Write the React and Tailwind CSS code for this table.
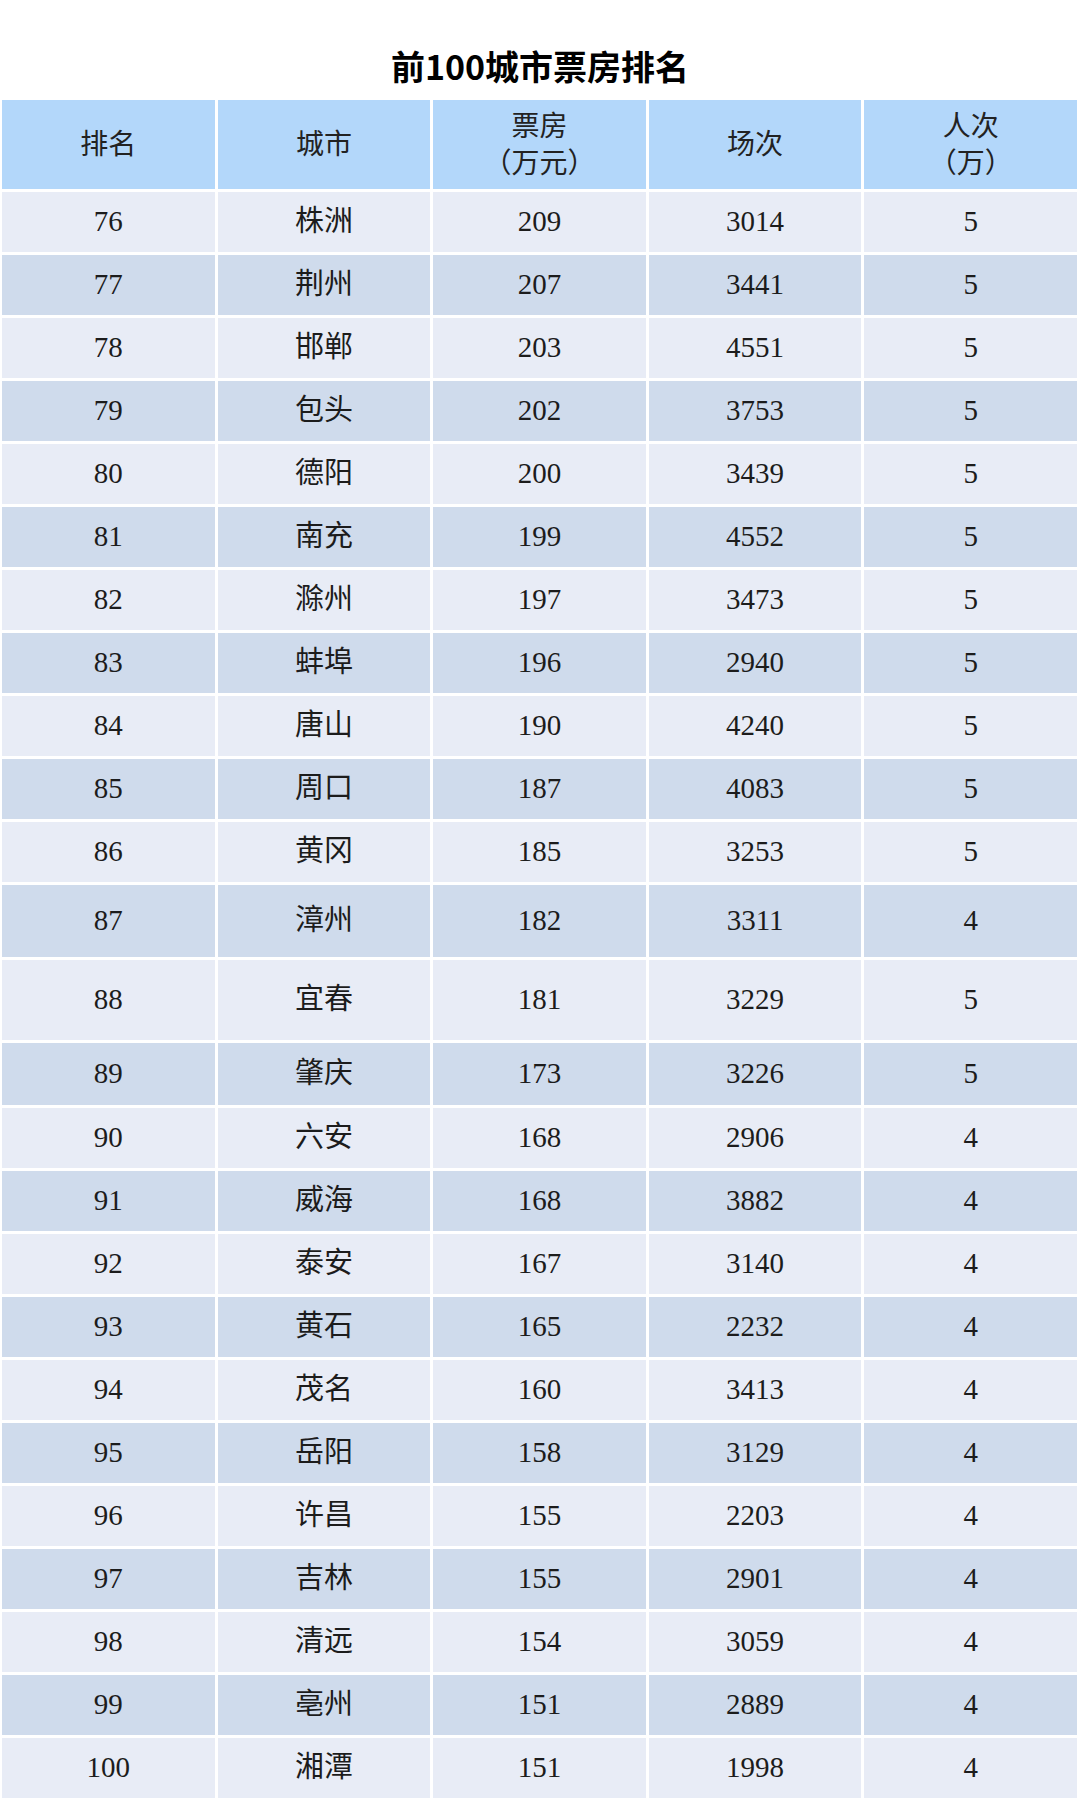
const rows = [
  [76, "株洲", 209, 3014, 5],
  [77, "荆州", 207, 3441, 5],
  [78, "邯郸", 203, 4551, 5],
  [79, "包头", 202, 3753, 5],
  [80, "德阳", 200, 3439, 5],
  [81, "南充", 199, 4552, 5],
  [82, "滁州", 197, 3473, 5],
  [83, "蚌埠", 196, 2940, 5],
  [84, "唐山", 190, 4240, 5],
  [85, "周口", 187, 4083, 5],
  [86, "黄冈", 185, 3253, 5],
  [87, "漳州", 182, 3311, 4],
  [88, "宜春", 181, 3229, 5],
  [89, "肇庆", 173, 3226, 5],
  [90, "六安", 168, 2906, 4],
  [91, "威海", 168, 3882, 4],
  [92, "泰安", 167, 3140, 4],
  [93, "黄石", 165, 2232, 4],
  [94, "茂名", 160, 3413, 4],
  [95, "岳阳", 158, 3129, 4],
  [96, "许昌", 155, 2203, 4],
  [97, "吉林", 155, 2901, 4],
  [98, "清远", 154, 3059, 4],
  [99, "亳州", 151, 2889, 4],
  [100, "湘潭", 151, 1998, 4],
];

// a few rows in the source image are taller than the rest
const rowHeight = (rank) => {
  if (rank === 87) return "h-[72px]";
  if (rank === 88) return "h-[80px]";
  if (rank === 89) return "h-[62px]";
  return "h-[60px]";
};

const headers = [["排名"], ["城市"], ["票房", "（万元）"], ["场次"], ["人次", "（万）"]];

export default function App() {
  return (
    <div className="w-[1080px] bg-white" style={{ fontFamily: '"Liberation Serif", "Noto Sans CJK SC", serif' }}>
      <div
        className="h-[100px] pt-[34px] pb-[4px] flex items-center justify-center text-[34px] font-bold text-black"
        style={{ fontFamily: '"Noto Sans CJK SC", "Noto Sans", sans-serif' }}
      >
        前100城市票房排名
      </div>

      <div className="pl-[2px] pr-[3px] flex flex-col gap-[3px]">
        <div className="grid grid-cols-5 gap-[3px] h-[89px]">
          {headers.map((h, i) => (
            <div
              key={i}
              className="bg-[#b3d7fa] flex flex-col items-center justify-center text-[28px] leading-[37px] text-[#222]"
            >
              {h.map((line) => (
                <span key={line}>{line}</span>
              ))}
            </div>
          ))}
        </div>

        {rows.map((r, idx) => (
          <div key={r[0]} className={`grid grid-cols-5 gap-[3px] ${rowHeight(r[0])}`}>
            {r.map((v, i) => (
              <div
                key={i}
                className={`flex items-center justify-center text-[29px] text-[#1c1c1c] ${
                  idx % 2 === 0 ? "bg-[#e8ecf6]" : "bg-[#cfdbec]"
                }`}
              >
                {v}
              </div>
            ))}
          </div>
        ))}
      </div>
    </div>
  );
}
